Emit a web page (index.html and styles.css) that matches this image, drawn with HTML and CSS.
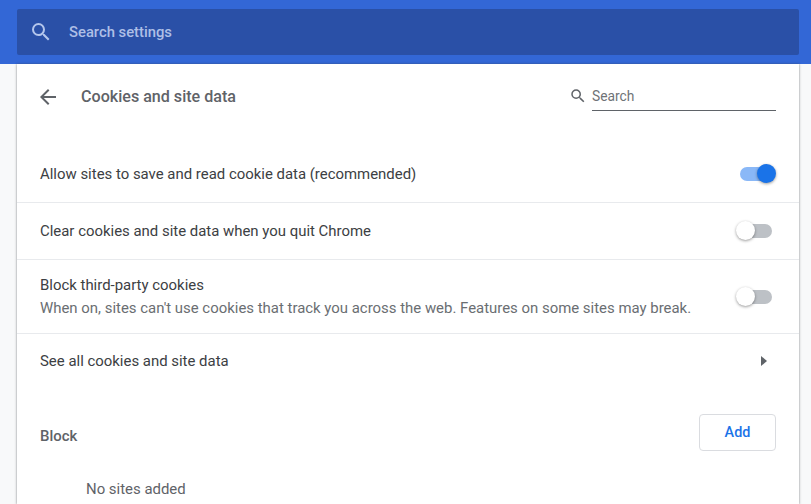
FILE: index.html
```html
<!DOCTYPE html>
<html lang="en">
<head>
    <meta charset="UTF-8">
    <title>Settings - Cookies and site data</title>
    <link rel="stylesheet" href="styles.css">
</head>
<body>
    <header class="toolbar">
        <div class="search-bar">
            <svg class="search-bar-icon" viewBox="0 0 24 24" width="24" height="24"><path d="M15.5 14h-.79l-.28-.27A6.47 6.47 0 0 0 16 9.5 6.5 6.5 0 1 0 9.5 16c1.61 0 3.09-.59 4.23-1.57l.27.28v.79l5 4.99L20.49 19l-4.99-5zm-6 0C7.01 14 5 11.99 5 9.5S7.01 5 9.5 5 14 7.01 14 9.5 11.99 14 9.5 14z"/></svg>
            <span class="search-bar-text">Search settings</span>
        </div>
    </header>

    <main class="card">
        <div class="card-head">
            <svg class="back-icon" viewBox="0 0 24 24" width="24" height="24"><path d="M20 11H7.83l5.59-5.59L12 4l-8 8 8 8 1.41-1.41L7.83 13H20v-2z"/></svg>
            <h1 class="card-title">Cookies and site data</h1>
            <div class="sub-search">
                <svg class="sub-search-icon" viewBox="0 0 24 24" width="18" height="18"><path d="M15.5 14h-.79l-.28-.27A6.47 6.47 0 0 0 16 9.5 6.5 6.5 0 1 0 9.5 16c1.61 0 3.09-.59 4.23-1.57l.27.28v.79l5 4.99L20.49 19l-4.99-5zm-6 0C7.01 14 5 11.99 5 9.5S7.01 5 9.5 5 14 7.01 14 9.5 11.99 14 9.5 14z"/></svg>
                <span class="sub-search-text">Search</span>
            </div>
        </div>

        <div class="rows">
            <div class="row row-first">
                <span class="row-label">Allow sites to save and read cookie data (recommended)</span>
                <span class="toggle toggle-on"><span class="toggle-knob"></span></span>
            </div>
            <div class="row">
                <span class="row-label">Clear cookies and site data when you quit Chrome</span>
                <span class="toggle"><span class="toggle-knob"></span></span>
            </div>
            <div class="row row-tall">
                <div>
                    <div class="row-label">Block third-party cookies</div>
                    <div class="row-sub">When on, sites can't use cookies that track you across the web. Features on some sites may break.</div>
                </div>
                <span class="toggle"><span class="toggle-knob"></span></span>
            </div>
            <div class="row row-link">
                <span class="row-label">See all cookies and site data</span>
                <span class="arrow"></span>
            </div>
        </div>

        <div class="section-head">
            <h2 class="section-title">Block</h2>
            <button class="add-button">Add</button>
        </div>
        <div class="empty-text">No sites added</div>
    </main>
</body>
</html>
```

FILE: styles.css
```css
html, body {
    margin: 0;
    padding: 0;
    height: 504px;
    overflow: hidden;
    background-color: #f8f9fa;
    font-family: Roboto, "Liberation Sans", sans-serif;
    font-size: 14.93px;
    line-height: 20px;
    color: #3c4043;
}

.toolbar {
    height: 64px;
    box-sizing: border-box;
    padding: 9px 12px 9px 17px;
    background-color: #3367d6;
}

.search-bar {
    display: flex;
    align-items: center;
    height: 46px;
    padding-left: 12px;
    border-radius: 2px;
    background-color: #2a50a7;
}

.search-bar-icon {
    fill: #b4c6ec;
}

.search-bar-text {
    margin-left: 16px;
    font-size: 14.8px;
    font-weight: 500;
    color: #aebfe6;
}

.card {
    height: 440px;
    margin: 0 12px 0 17px;
    overflow: hidden;
    background-color: #fff;
    box-shadow: 0 0 2px rgba(60, 64, 67, 0.5), 0 1px 3px rgba(60, 64, 67, 0.2);
}

.card-head {
    display: flex;
    align-items: center;
    height: 66px;
    padding: 0 23px 0 19px;
}

.back-icon {
    fill: #5f6368;
}

.card-title {
    flex-grow: 1;
    margin: 0 0 0 21px;
    font-size: 16.1px;
    font-weight: 500;
    color: #5f6368;
}

.sub-search {
    position: relative;
    width: 184px;
    height: 28px;
    margin-bottom: 1px;
    border-bottom: 1px solid #5f6368;
}

.sub-search-icon {
    position: absolute;
    left: -23px;
    top: 5px;
    fill: #5f6368;
}

.sub-search-text {
    display: block;
    padding-top: 4px;
    font-size: 13.8px;
    color: #6f7377;
}

.rows {
    margin-top: 15px;
}

.row {
    display: flex;
    align-items: center;
    justify-content: space-between;
    height: 56px;
    padding: 0 27px 0 23px;
    border-top: 1px solid #e8eaed;
}

.row-first {
    height: 57px;
    border-top: none;
}

.row-tall {
    height: 73px;
}

.row-link {
    height: 54px;
}

.row-sub {
    margin-top: 3px;
    color: #6a6e72;
}

.toggle {
    position: relative;
    flex-shrink: 0;
    width: 32px;
    height: 14px;
    border-radius: 7px;
    background-color: #bdc1c6;
}

.toggle-knob {
    position: absolute;
    left: -4px;
    top: -3px;
    width: 19px;
    height: 19px;
    border-radius: 50%;
    background-color: #fff;
    box-shadow: 0 1px 3px rgba(0, 0, 0, 0.4);
}

.toggle-on {
    background-color: #8ab8f7;
}

.toggle-on .toggle-knob {
    left: auto;
    right: -4px;
    background-color: #1a73e8;
}

.arrow {
    width: 0;
    height: 0;
    margin-right: 5px;
    border-top: 5px solid transparent;
    border-bottom: 5px solid transparent;
    border-left: 6px solid #5f6368;
}

.section-head {
    display: flex;
    align-items: center;
    justify-content: space-between;
    margin-top: 26px;
    padding: 0 23px;
}

.section-title {
    margin: 6px 0 0;
    font-size: 14.93px;
    font-weight: 500;
    color: #5f6368;
}

.add-button {
    width: 77px;
    height: 37px;
    padding: 0;
    border: 1px solid #dadce0;
    border-radius: 4px;
    background-color: #fff;
    font-family: inherit;
    font-size: 14.4px;
    font-weight: 500;
    color: #1a73e8;
}

.empty-text {
    margin-top: 28px;
    padding-left: 69px;
    color: #5f6368;
}
```
